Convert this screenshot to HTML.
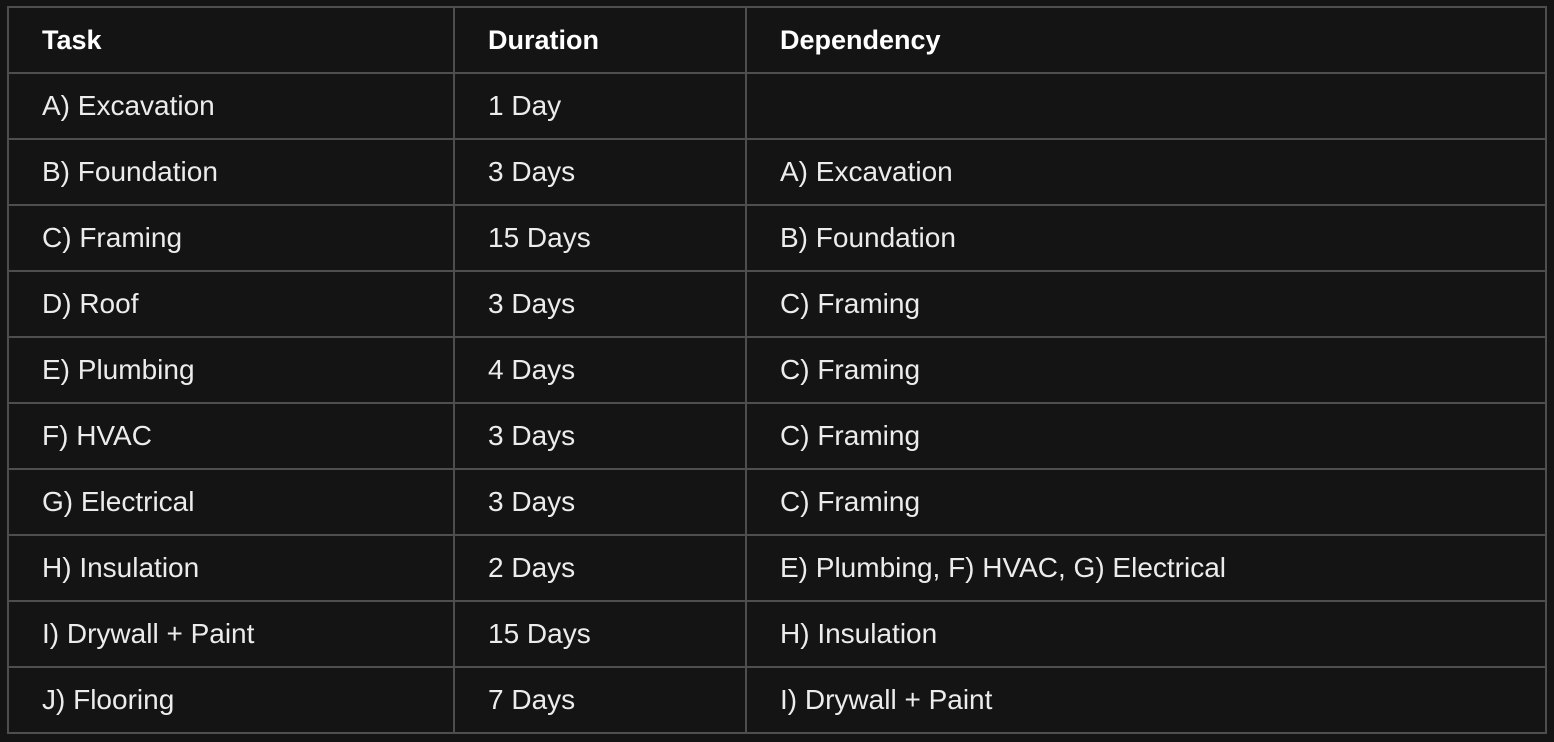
<!DOCTYPE html>
<html><head><style>
html,body{margin:0;padding:0;background:#141414;width:1554px;height:742px;overflow:hidden}
table{position:absolute;left:7px;top:6px;border-collapse:collapse;width:1540px;font-family:"Liberation Sans",sans-serif;color:#ececec;font-size:28px}
td,th{border:2px solid #4e4e4e;height:62px;padding:0 0 0 33px;text-align:left;box-sizing:border-box}
th{font-weight:bold;color:#fff;font-size:27px}
tr{height:66px}
</style></head><body>
<table>
<colgroup><col style="width:446px"><col style="width:292px"><col></colgroup>
<tr><th>Task</th><th>Duration</th><th>Dependency</th></tr>
<tr><td>A) Excavation</td><td>1 Day</td><td></td></tr>
<tr><td>B) Foundation</td><td>3 Days</td><td>A) Excavation</td></tr>
<tr><td>C) Framing</td><td>15 Days</td><td>B) Foundation</td></tr>
<tr><td>D) Roof</td><td>3 Days</td><td>C) Framing</td></tr>
<tr><td>E) Plumbing</td><td>4 Days</td><td>C) Framing</td></tr>
<tr><td>F) HVAC</td><td>3 Days</td><td>C) Framing</td></tr>
<tr><td>G) Electrical</td><td>3 Days</td><td>C) Framing</td></tr>
<tr><td>H) Insulation</td><td>2 Days</td><td>E) Plumbing, F) HVAC, G) Electrical</td></tr>
<tr><td>I) Drywall + Paint</td><td>15 Days</td><td>H) Insulation</td></tr>
<tr><td>J) Flooring</td><td>7 Days</td><td>I) Drywall + Paint</td></tr>
</table>
</body></html>
